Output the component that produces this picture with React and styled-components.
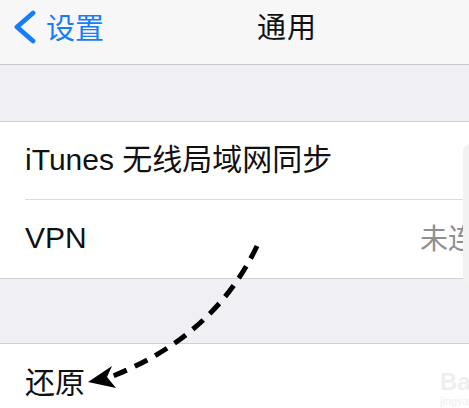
import React from "react";
import styled, { createGlobalStyle } from "styled-components";

const Global = createGlobalStyle`
  html, body { margin: 0; padding: 0; background: #efeff4; overflow: hidden; }
  body { font-family: "Liberation Sans", "Noto Sans CJK SC", sans-serif; }
`;

const Screen = styled.div`
  position: relative;
  width: 572px;
  height: 408px;
  background: #efeff4;
  overflow: hidden;
`;

const NavBar = styled.div`
  height: 54px;
  padding-bottom: 10px;
  background: #f7f7f8;
  border-bottom: 1px solid #c8c7cc;
  display: flex;
  align-items: center;
  padding-left: 12px;
  box-sizing: content-box;
`;

const Back = styled.div`
  display: flex;
  align-items: center;
  gap: 10px;
  color: #167dfa;
  font-family: "Noto Sans CJK SC", sans-serif;
  font-size: 29px;
  line-height: 1;
  span { margin-top: -2px; }
`;

const Title = styled.div`
  margin-left: 153px;
  font-family: "Noto Sans CJK SC", sans-serif;
  font-size: 29px;
  color: #111;
  line-height: 1;
  margin-top: -4px;
  letter-spacing: 1px;
`;

const Gap = styled.div`
  height: ${(p) => p.h}px;
  border-bottom: 1px solid #d1d1d6;
`;

const Group = styled.div`
  background: #fff;
  border-bottom: 1px solid #d1d1d6;
`;

const Row = styled.div`
  height: ${(p) => p.h || 77}px;
  display: flex;
  align-items: center;
  margin-left: 25px;
  padding-right: 68px;
  border-bottom: ${(p) => (p.sep ? "1px solid #dcdce0" : "none")};
  color: #111;
  font-size: 30px;
`;

const Label = styled.span`
  flex: 1;
  font-family: "Liberation Sans", "Noto Sans CJK SC", sans-serif;
  font-size: 30px;
  line-height: 1;
  margin-top: -2px;
`;

const Value = styled.span`
  color: #8e8e93;
  font-family: "Noto Sans CJK SC", sans-serif;
  font-size: 28px;
  line-height: 1;
  margin-top: -4px;
`;

const Overlay = styled.svg`
  position: absolute;
  left: 0;
  top: 0;
  pointer-events: none;
`;

const SidePanel = styled.div`
  position: absolute;
  left: 463px;
  top: 144px;
  width: 30px;
  height: 142px;
  border-radius: 8px 0 0 8px;
  background: linear-gradient(to right, #f1f1f1, #f6f6f6);
`;

const Watermark = styled.div`
  position: absolute;
  left: 440px;
  top: 370px;
  display: flex;
  flex-direction: column;
  color: #efefef;
  font-family: "Liberation Sans", sans-serif;
  font-weight: bold;
  font-size: 24px;
  line-height: 1;
  small {
    font-size: 11px;
    font-weight: normal;
    color: #f0f0f0;
    margin-top: 2px;
  }
`;

export default function App() {
  return (
    <>
      <Global />
      <Screen>
        <NavBar>
          <Back>
            <svg width="24" height="34" viewBox="0 0 24 34">
              <path d="M21 3 L5 17 L21 31" fill="none" stroke="#167dfa" strokeWidth="4.8" strokeLinecap="round" strokeLinejoin="round" />
            </svg>
            <span>设置</span>
          </Back>
          <Title>通用</Title>
        </NavBar>
        <Gap h={56} />
        <Group>
          <Row sep>
            <Label>iTunes 无线局域网同步</Label>
          </Row>
          <Row h={78}>
            <Label>VPN</Label>
            <Value>未连接</Value>
          </Row>
        </Group>
        <Gap h={64} />
        <Group>
          <Row h={80}>
            <Label>还原</Label>
          </Row>
        </Group>
        <SidePanel />
        <Watermark>
          Bai
          <small>jingyan</small>
        </Watermark>
        <Overlay width="469" height="408">
          <path d="M257 246 Q 215 335 113 376" fill="none" stroke="#000" strokeWidth="5" strokeDasharray="14 9" />
          <polygon points="88,382 112,366 107,377 116,388" fill="#000" />
        </Overlay>
      </Screen>
    </>
  );
}
